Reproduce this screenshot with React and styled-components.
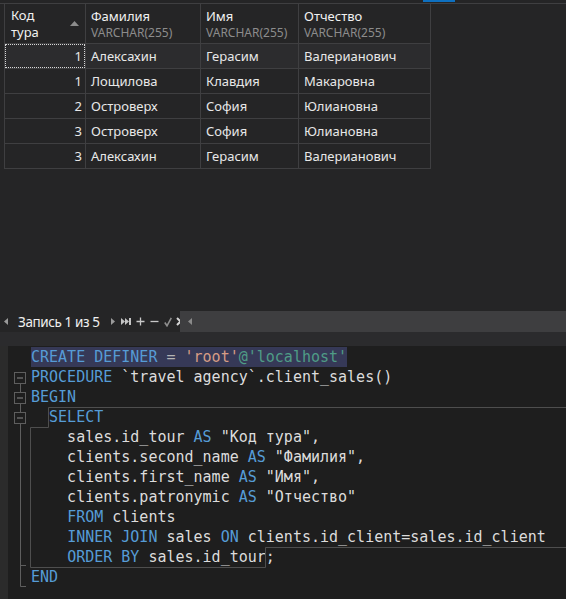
import React from "react"
import styled, { createGlobalStyle } from "styled-components"

const rows = [
    [1, "Алексахин", "Герасим", "Валерианович"],
    [1, "Лощилова", "Клавдия", "Макаровна"],
    [2, "Островерх", "София", "Юлиановна"],
    [3, "Островерх", "София", "Юлиановна"],
    [3, "Алексахин", "Герасим", "Валерианович"],
]

// each line is a list of [text, kind]
const code = [
    [["CREATE DEFINER", "kw"], [" = ", "op"], ["'root'", "str"], ["@'localhost'", "host"]],
    [["PROCEDURE", "kw"], [" `travel agency`.client_sales()", "id"]],
    [["BEGIN", "kw"]],
    [["  ", "id"], ["SELECT", "kw"]],
    [["    sales.id_tour ", "id"], ["AS", "kw"], [" \"Код тура\",", "id"]],
    [["    clients.second_name ", "id"], ["AS", "kw"], [" \"Фамилия\",", "id"]],
    [["    clients.first_name ", "id"], ["AS", "kw"], [" \"Имя\",", "id"]],
    [["    clients.patronymic ", "id"], ["AS", "kw"], [" \"Отчество\"", "id"]],
    [["    ", "id"], ["FROM", "kw"], [" clients", "id"]],
    [["    ", "id"], ["INNER JOIN", "kw"], [" sales ", "id"], ["ON", "kw"], [" clients.id_client=sales.id_client", "id"]],
    [["    ", "id"], ["ORDER BY", "kw"], [" sales.id_tour;", "id"]],
    [["END", "kw"]],
]

const tokenColors = {
    kw: "#569cd6",
    op: "#b4b4b4",
    str: "#d69d85",
    host: "#4f9c86",
    id: "#dcdcdc",
}

const Triangle = ({ dir = "left", color = "#9a9a9a" }) => (
    <svg width="4" height="7" viewBox="0 0 4 7">
        {dir === "left"
            ? <polygon points="4,0 4,7 0,3.5" fill={color} />
            : <polygon points="0,0 0,7 4,3.5" fill={color} />}
    </svg>
)

const FoldBox = ({ y }) => (
    <g>
        <rect x="6.5" y={y + 0.5} width="11" height="11" fill="#1e1e1e" stroke="#5e5e5e" />
        <line x1="9" y1={y + 6} x2="15" y2={y + 6} stroke="#8a8a8a" />
    </g>
)

const App = () => {
    return (
        <Page>
            <GlobalStyle />
            <TopStrip>
                <ScrollThumb />
            </TopStrip>
            <ResultArea>
                <Grid>
                    <HeadCell>
                        <HeadTitle>Код<br />тура</HeadTitle>
                        <svg width="9" height="5" viewBox="0 0 9 5">
                            <polygon points="0,5 9,5 4.5,0" fill="#8c8c8c" />
                        </svg>
                    </HeadCell>
                    {["Фамилия", "Имя", "Отчество"].map((name) => (
                        <HeadCell key={name} $stack>
                            <HeadTitle>{name}</HeadTitle>
                            <TypeLabel>VARCHAR(255)</TypeLabel>
                        </HeadCell>
                    ))}
                    {rows.map((row, i) => (
                        <React.Fragment key={i}>
                            <NumCell $selected={i === 0} $focused={i === 0}>{row[0]}</NumCell>
                            <TextCell $selected={i === 0}>{row[1]}</TextCell>
                            <TextCell $selected={i === 0}>{row[2]}</TextCell>
                            <TextCell $selected={i === 0}>{row[3]}</TextCell>
                        </React.Fragment>
                    ))}
                </Grid>
            </ResultArea>
            <StatusBar>
                <NavPart>
                    <Icon $gap={4}><Triangle dir="left" /></Icon>
                    <RecordText>Запись 1 из 5</RecordText>
                    <Icon $gap={11}><Triangle dir="right" /></Icon>
                    <Icon $gap={6}>
                        <svg width="10" height="7" viewBox="0 0 10 7">
                            <polygon points="0,0 0,7 4,3.5" fill="#c4c4c4" />
                            <polygon points="4,0 4,7 8,3.5" fill="#c4c4c4" />
                            <rect x="8" y="0" width="2" height="7" fill="#c4c4c4" />
                        </svg>
                    </Icon>
                    <Icon $gap={5}>
                        <svg width="9" height="9" viewBox="0 0 9 9">
                            <path d="M4.5 0.5V8.5M0.5 4.5H8.5" stroke="#c8c8c8" strokeWidth="1.3" />
                        </svg>
                    </Icon>
                    <Icon $gap={5}>
                        <svg width="9" height="9" viewBox="0 0 9 9">
                            <path d="M0.5 4.5H8.5" stroke="#c8c8c8" strokeWidth="1.3" />
                        </svg>
                    </Icon>
                    <Icon $gap={5}>
                        <svg width="8" height="10" viewBox="0 0 8 10">
                            <path d="M0.8 5.5L3 8.8L7.3 0.8" stroke="#8e8e8e" strokeWidth="1.6" fill="none" />
                        </svg>
                    </Icon>
                    <Icon $gap={4}>
                        <svg width="9" height="9" viewBox="0 0 9 9">
                            <path d="M1 1L8 8M8 1L1 8" stroke="#d4d4d4" strokeWidth="2" />
                        </svg>
                    </Icon>
                </NavPart>
                <ScrollPart>
                    <Triangle dir="left" color="#8a8a8a" />
                </ScrollPart>
            </StatusBar>
            <Band />
            <Editor>
                <LeftStrip />
                <Gutter>
                    <svg width="22" height="253" viewBox="0 0 22 253">
                        <FoldBox y={26} />
                        <FoldBox y={46} />
                        <FoldBox y={66} />
                        <path d="M12.5 38V46M12.5 58V66M12.5 78V240.5H18M12.5 219.5H18" stroke="#5e5e5e" fill="none" />
                    </svg>
                </Gutter>
                <Code>
                    {code.map((line, i) => (
                        <CodeLine key={i}>
                            {i === 0
                                ? <Selection>{line.map(([t, k], j) => <Token key={j} $kind={k}>{t}</Token>)}</Selection>
                                : line.map(([t, k], j) => <Token key={j} $kind={k}>{t}</Token>)}
                        </CodeLine>
                    ))}
                    <ScopeOutline width="536" height="253" viewBox="0 0 536 253">
                        <path d="M536 61.5H18.5V81.5H0.5V221.5H235.5V201.5H536" stroke="#4e4e4e" fill="none" />
                    </ScopeOutline>
                </Code>
            </Editor>
        </Page>
    )
}

const GlobalStyle = createGlobalStyle`
html, body {
    margin: 0;
    padding: 0;
    background: #252526;
}
body {
    font-family: "Noto Sans", "Open Sans", sans-serif;
    overflow: hidden;
}
svg {
    display: block;
}
`

const Page = styled.div`
width: 566px;
height: 599px;
display: flex;
flex-direction: column;
background: #252526;
overflow: hidden;
`

const TopStrip = styled.div`
height: 3px;
flex-shrink: 0;
display: flex;
`

const ScrollThumb = styled.div`
margin-left: 423px;
width: 32px;
height: 2px;
background: #0e70c0;
`

const ResultArea = styled.div`
border-top: 1px solid #3f3f41;
height: 307px;
flex-shrink: 0;
`

const Grid = styled.div`
margin-left: 4px;
display: grid;
grid-template-columns: 80px 114px 97px 131px;
grid-template-rows: 39px repeat(5, 24px);
gap: 1px;
padding: 0 1px 1px 1px;
width: max-content;
background: #3f3f41;
`

const HeadCell = styled.div`
background: #252526;
display: flex;
flex-direction: ${(p) => (p.$stack ? "column" : "row")};
justify-content: ${(p) => (p.$stack ? "center" : "space-between")};
align-items: ${(p) => (p.$stack ? "flex-start" : "center")};
padding: 0 6px 0 ${(p) => (p.$stack ? "5px" : "6px")};
`

const HeadTitle = styled.div`
color: #f1f1f1;
font-size: 13px;
line-height: 17px;
`

const TypeLabel = styled.div`
color: #8c8c8c;
font-size: 12px;
line-height: 15px;
`

const TextCell = styled.div`
background: ${(p) => (p.$selected ? "#2c2c2e" : "#252526")};
color: #e8e8e8;
font-size: 13px;
display: flex;
align-items: center;
padding-left: 5px;
white-space: nowrap;
`

const NumCell = styled(TextCell)`
justify-content: flex-end;
padding: 0 3px 0 0;
outline: ${(p) => (p.$focused ? "1px dotted #d8d8d8" : "none")};
outline-offset: -1px;
`

const StatusBar = styled.div`
height: 21px;
flex-shrink: 0;
display: flex;
align-items: stretch;
`

const NavPart = styled.div`
width: 180px;
display: flex;
align-items: center;
`

const Icon = styled.span`
display: flex;
align-items: center;
margin-left: ${(p) => p.$gap}px;
`

const RecordText = styled.span`
margin-left: 10px;
color: #f0f0f0;
font-size: 13.5px;
letter-spacing: -0.4px;
white-space: nowrap;
`

const ScrollPart = styled.div`
flex: 1;
background: #3e3e40;
display: flex;
align-items: center;
padding-left: 8px;
`

const Band = styled.div`
height: 14px;
flex-shrink: 0;
background: #2b2b2d;
`

const Editor = styled.div`
flex: 1;
min-height: 0;
display: flex;
background: #1e1e1e;
`

const LeftStrip = styled.div`
width: 8px;
background: #2b2b2b;
`

const Gutter = styled.div`
width: 22px;
`

const Code = styled.div`
position: relative;
flex: 1;
padding: 1px 0 0 1px;
font-family: "DejaVu Sans Mono", "Liberation Mono", monospace;
font-size: 15px;
`

const CodeLine = styled.div`
height: 20px;
line-height: 20px;
white-space: pre;
`

const Selection = styled.span`
background: #363957;
padding: 1px 0;
`

const Token = styled.span`
color: ${(p) => tokenColors[p.$kind]};
`

const ScopeOutline = styled.svg`
position: absolute;
left: 0;
top: 0;
pointer-events: none;
`

export default App
